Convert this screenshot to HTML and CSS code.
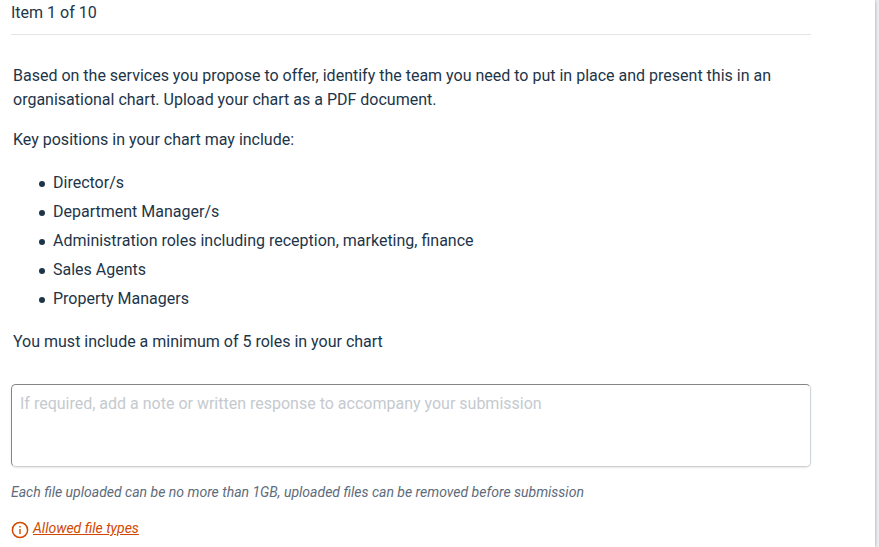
FILE: index.html
```html
<!DOCTYPE html>
<html lang="en">
<head>
    <meta charset="UTF-8">
    <meta name="viewport" content="width=device-width, initial-scale=1.0">
    <title>Item 1 of 10</title>
    <link rel="stylesheet" href="styles.css">
</head>
<body>
    <main class="panel">
        <div class="item-header">Item 1 of 10</div>

        <div class="question">
            <p>Based on the services you propose to offer, identify the team you need to put in place and present this in an organisational chart. Upload your chart as a PDF document.</p>
            <p>Key positions in your chart may include:</p>
            <ul>
                <li>Director/s</li>
                <li>Department Manager/s</li>
                <li>Administration roles including reception, marketing, finance</li>
                <li>Sales Agents</li>
                <li>Property Managers</li>
            </ul>
            <p>You must include a minimum of 5 roles in your chart</p>
        </div>

        <textarea class="response" aria-label="Written response" placeholder="If required, add a note or written response to accompany your submission"></textarea>

        <p class="upload-note">Each file uploaded can be no more than 1GB, uploaded files can be removed before submission</p>

        <div class="file-types">
            <svg class="info-icon" viewBox="0 0 18 18" aria-hidden="true">
                <circle cx="9" cy="9" r="7.6" fill="none" stroke="currentColor" stroke-width="1.5"/>
                <path d="M9 8v5" stroke="currentColor" stroke-width="1.4"/>
                <path d="M9 5v1.5" stroke="currentColor" stroke-width="1.4"/>
            </svg>
            <a href="#">Allowed file types</a>
        </div>
    </main>
</body>
</html>
```
FILE: styles.css
```css
* {
    margin: 0;
    padding: 0;
    box-sizing: border-box;
}

body {
    font-family: Roboto, "Liberation Sans", sans-serif;
    font-size: 16px;
    line-height: 24px;
    color: #1d3549;
    background: #f1f2f4;
    padding-right: 4px;
}

.panel {
    min-height: 100vh;
    padding: 0 64px 0 11px;
    background: white;
    box-shadow: 0 0 4px rgba(40, 50, 65, 0.45);
}

.item-header {
    padding: 1px 0 9px;
    border-bottom: 1px solid #e3e5e6;
}

.question {
    padding: 29px 2px 30px;
}

.question p {
    margin-bottom: 16px;
}

.question ul {
    margin: 19px 0;
    padding-left: 26px;
    list-style: none;
}

.question li {
    display: flex;
    gap: 8px;
    margin-bottom: 5px;
}

.question li::before {
    content: "";
    flex: none;
    width: 6px;
    height: 6px;
    margin-top: 10px;
    border-radius: 50%;
    background: currentColor;
}

.question p:last-child {
    margin-bottom: 0;
}

.response {
    display: block;
    width: 100%;
    height: 83px;
    padding: 7px 8px;
    font: inherit;
    color: inherit;
    background: white;
    border: 1px solid;
    border-color: #858585 #ced6dc #ced0d2 #858585;
    border-radius: 5px;
    box-shadow: 0 1px 2px rgba(0, 0, 0, 0.1);
    resize: none;
}

.response::placeholder {
    color: #c5cacf;
    opacity: 1;
}

.upload-note {
    margin: 13px 0 12px;
    font-size: 14px;
    font-style: italic;
    color: #5d6b7b;
}

.file-types {
    display: flex;
    align-items: flex-start;
    gap: 4px;
    font-size: 14px;
    font-style: italic;
    color: #d14900;
}

.file-types a {
    color: inherit;
}

.info-icon {
    width: 18px;
    height: 18px;
    margin-top: 5px;
}
```
